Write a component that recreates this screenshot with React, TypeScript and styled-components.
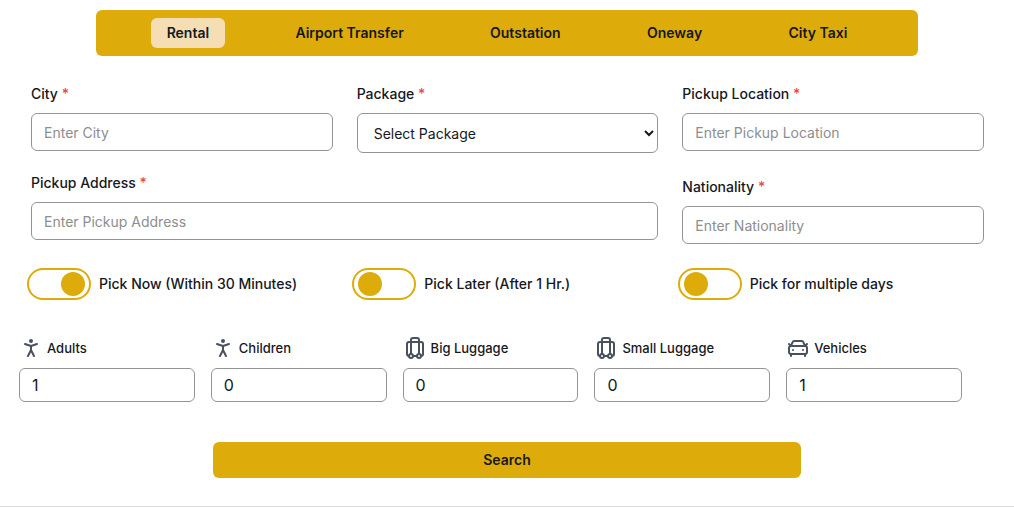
import React, { useId, useState } from "react";
import styled, { createGlobalStyle } from "styled-components";
import { CarFront, Luggage, PersonStanding, type LucideIcon } from "lucide-react";

const gold = "#deac0a";
const ink = "#16181d";

const GlobalStyle = createGlobalStyle`
  *, *::before, *::after { box-sizing: border-box; }
  body {
    margin: 0;
    background: #fff;
    color: ${ink};
    font-family: Inter, "Open Sans", sans-serif;
    font-size: 14px;
    line-height: 20px;
  }
  button, input, select { font: inherit; color: inherit; }
`;

const Page = styled.main`
  padding-top: 10px;
  border-bottom: 1px solid #dcdcdc;
`;

const TabBar = styled.nav`
  display: flex;
  justify-content: space-evenly;
  width: 81%;
  margin: 0 auto;
  padding: 8px 0;
  border-radius: 6px;
  background: ${gold};
`;

const Tab = styled.button<{ $active: boolean }>`
  height: 30px;
  padding: 0 16px;
  border: 0;
  border-radius: 6px;
  background: ${(p) => (p.$active ? "#f5deb3" : "transparent")};
  font-weight: 600;
  white-space: nowrap;
  cursor: pointer;
`;

const Form = styled.form`
  padding: 28px 0;
`;

const FieldGrid = styled.div`
  display: grid;
  grid-template-columns: repeat(3, minmax(0, 1fr));
  gap: 20px 24px;
  align-items: start;
  padding: 0 30px 0 31px;
`;

const FieldBox = styled.div<{ $wide?: boolean; $lowered?: boolean }>`
  display: flex;
  flex-direction: column;
  gap: 9px;
  grid-column: span ${(p) => (p.$wide ? 2 : 1)};
  padding-top: ${(p) => (p.$lowered ? 4 : 0)}px;
`;

const FieldLabel = styled.label`
  font-weight: 500;
`;

const Required = styled.span`
  color: #e5484d;
`;

const TextInput = styled.input`
  width: 100%;
  height: 38px;
  padding: 0 12px;
  border: 1px solid #949494;
  border-radius: 6px;
  background: #fff;
  &::placeholder { color: #8e8e8e; opacity: 1; }
`;

const Select = styled.select`
  width: 100%;
  height: 40px;
  padding: 0 0 0 12px;
  border: 1px solid #949494;
  border-radius: 6px;
  background: #fff;
`;

const ToggleGrid = styled.div`
  display: grid;
  grid-template-columns: repeat(3, minmax(0, 1fr));
  gap: 24px;
  padding: 24px 35px 36px 27px;
`;

const ToggleLabel = styled.label`
  display: flex;
  align-items: center;
  gap: 8px;
  font-weight: 500;
  white-space: nowrap;
`;

const Switch = styled.input`
  appearance: none;
  display: flex;
  align-items: center;
  flex: none;
  width: 64px;
  height: 32px;
  margin: 0;
  padding: 0 4px;
  border: 2px solid ${gold};
  border-radius: 16px;
  background: #fff;
  cursor: pointer;
  &::before {
    content: "";
    width: 24px;
    height: 24px;
    border-radius: 50%;
    background: ${gold};
  }
  &:checked { justify-content: flex-end; }
`;

const CounterGrid = styled.div`
  display: grid;
  grid-template-columns: repeat(5, minmax(0, 1fr));
  gap: 16px;
  padding: 0 52px 0 19px;
`;

const CounterBox = styled.div`
  display: flex;
  flex-direction: column;
  gap: 8px;
`;

const CounterLabel = styled.label`
  display: flex;
  align-items: center;
  gap: 4px;
  font-size: 13px;
  font-weight: 500;
  white-space: nowrap;
  svg { color: #475160; }
`;

const CounterInput = styled(TextInput)`
  height: 34px;
  font-size: 16px;
`;

const SearchButton = styled.button`
  display: block;
  width: 58%;
  height: 36px;
  margin: 40px auto 0;
  border: 0;
  border-radius: 6px;
  background: ${gold};
  font-weight: 600;
  cursor: pointer;
`;

type FieldProps = { label: string; wide?: boolean; lowered?: boolean; options?: string[] };

function Field({ label, wide, lowered, options }: FieldProps) {
  const id = useId();
  return (
    <FieldBox $wide={wide} $lowered={lowered}>
      <FieldLabel htmlFor={id}>
        {label} <Required>*</Required>
      </FieldLabel>
      {options ? (
        <Select id={id}>
          {options.map((o) => <option key={o}>{o}</option>)}
        </Select>
      ) : (
        <TextInput id={id} type="text" placeholder={`Enter ${label}`} />
      )}
    </FieldBox>
  );
}

function Counter({ label, icon: Icon, value }: { label: string; icon: LucideIcon; value: number }) {
  const id = useId();
  return (
    <CounterBox>
      <CounterLabel htmlFor={id}>
        <Icon size={24} />
        {label}
      </CounterLabel>
      <CounterInput id={id} type="number" min={0} defaultValue={value} />
    </CounterBox>
  );
}

const tabs = ["Rental", "Airport Transfer", "Outstation", "Oneway", "City Taxi"];
const pickTimes = ["Pick Now (Within 30 Minutes)", "Pick Later (After 1 Hr.)", "Pick for multiple days"];

export default function App() {
  const [tab, setTab] = useState(tabs[0]);
  const [pick, setPick] = useState(pickTimes[0]);
  return (
    <>
      <GlobalStyle />
      <Page>
        <TabBar>
          {tabs.map((t) => (
            <Tab key={t} type="button" $active={t === tab} onClick={() => setTab(t)}>{t}</Tab>
          ))}
        </TabBar>
        <Form onSubmit={(e) => e.preventDefault()}>
          <FieldGrid>
            <Field label="City" />
            <Field label="Package" options={["Select Package"]} />
            <Field label="Pickup Location" />
            <Field label="Pickup Address" wide />
            <Field label="Nationality" lowered />
          </FieldGrid>
          <ToggleGrid>
            {pickTimes.map((p) => (
              <ToggleLabel key={p}>
                <Switch type="checkbox" checked={p === pick} onChange={() => setPick(p)} />
                {p}
              </ToggleLabel>
            ))}
          </ToggleGrid>
          <CounterGrid>
            <Counter label="Adults" icon={PersonStanding} value={1} />
            <Counter label="Children" icon={PersonStanding} value={0} />
            <Counter label="Big Luggage" icon={Luggage} value={0} />
            <Counter label="Small Luggage" icon={Luggage} value={0} />
            <Counter label="Vehicles" icon={CarFront} value={1} />
          </CounterGrid>
          <SearchButton type="submit">Search</SearchButton>
        </Form>
      </Page>
    </>
  );
}
